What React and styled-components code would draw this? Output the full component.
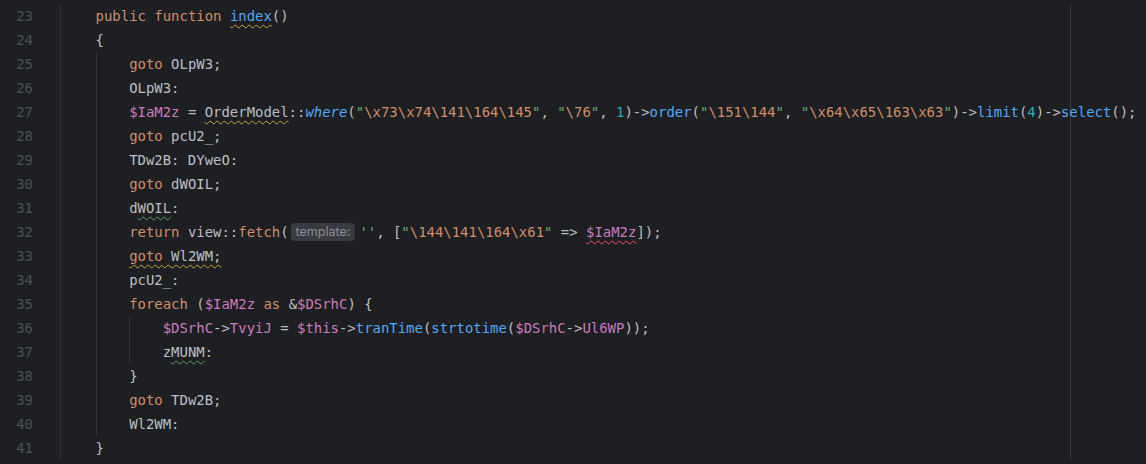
import React from "react";
import styled, { createGlobalStyle } from "styled-components";

const GlobalStyle = createGlobalStyle`
  html, body {
    margin: 0;
    padding: 0;
    background: #1e1f22;
    overflow: hidden;
  }
`;

const COLORS = {
  p: "#bcbec4",
  kw: "#cf8e6d",
  str: "#6aab73",
  esc: "#cf8e6d",
  num: "#2aacb8",
  fn: "#56a8f5",
  vr: "#c77dbb",
};

const WAVES = {
  warn: "#c9a43f",
  typo: "#5f9e62",
  err: "#f2566b",
};

const Editor = styled.div`
  display: flex;
  flex-direction: column;
  width: 1146px;
  height: 464px;
  padding-top: 4px;
  box-sizing: border-box;
  background: #1e1f22;
  font-family: "DejaVu Sans Mono", "Liberation Mono", monospace;
  font-size: 13.95px;
  overflow: hidden;
`;

const Row = styled.div`
  display: flex;
  height: 24px;
  line-height: 24px;
`;

const LineNo = styled.div`
  flex: 0 0 61px;
  box-sizing: border-box;
  padding-right: 27px;
  text-align: right;
  color: #4b5059;
  border-right: 1px solid #2e3034;
`;

const Code = styled.div`
  flex: 1;
  padding-left: 1px;
  white-space: pre;
  color: #bcbec4;
  background: linear-gradient(
    to right,
    transparent 1009px,
    #393b40 1009px,
    #393b40 1010px,
    transparent 1010px
  );
`;

const Indent = styled.span`
  display: inline-block;
  width: 4ch;
  height: 24px;
  vertical-align: top;
  box-shadow: ${(p) => (p.$guide ? "inset 1px 0 0 #313438" : "none")};
`;

const Tok = styled.span`
  color: ${(p) => COLORS[p.$t] || COLORS.p};
  font-style: ${(p) => (p.$i ? "italic" : "normal")};
  text-decoration: ${(p) =>
    p.$w ? `underline wavy ${WAVES[p.$w]}` : "none"};
  text-decoration-thickness: 1px;
  text-underline-offset: 3px;
  text-decoration-skip-ink: none;
`;

const Hint = styled.span`
  display: inline-block;
  height: 18px;
  line-height: 18px;
  padding: 0 5px;
  margin: 0 4px 0 2px;
  border-radius: 4px;
  background: #393b40;
  color: #8c8f95;
  font-family: Inter, "Noto Sans", sans-serif;
  font-size: 12.5px;
  vertical-align: middle;
  position: relative;
  top: -1px;
`;

const L = (n, indent, tokens) => ({ n, indent, tokens });

const LINES = [
  L(23, 1, [["kw", "public"], ["p", " "], ["kw", "function"], ["p", " "], ["fn", "index", "warn"], ["p", "()"]]),
  L(24, 1, [["p", "{"]]),
  L(25, 2, [["kw", "goto"], ["p", " OLpW3;"]]),
  L(26, 2, [["p", "OLpW3:"]]),
  L(27, 2, [
    ["vr", "$IaM2z"], ["p", " = "], ["p", "OrderModel", "warn"], ["p", "::"], ["fn", "where", null, true],
    ["p", "("], ["str", '"'], ["esc", "\\x73\\x74\\141\\164\\145"], ["str", '"'], ["p", ", "],
    ["str", '"'], ["esc", "\\76"], ["str", '"'], ["p", ", "], ["num", "1"], ["p", ")->"],
    ["fn", "order"], ["p", "("], ["str", '"'], ["esc", "\\151\\144"], ["str", '"'], ["p", ", "],
    ["str", '"'], ["esc", "\\x64\\x65\\163\\x63"], ["str", '"'], ["p", ")->"],
    ["fn", "limit"], ["p", "("], ["num", "4"], ["p", ")->"], ["fn", "select"], ["p", "();"],
  ]),
  L(28, 2, [["kw", "goto"], ["p", " pcU2_;"]]),
  L(29, 2, [["p", "TDw2B: DYweO:"]]),
  L(30, 2, [["kw", "goto"], ["p", " dWOIL;"]]),
  L(31, 2, [["p", "d"], ["p", "WOIL", "typo"], ["p", ":"]]),
  L(32, 2, [
    ["kw", "return"], ["p", " view::"], ["kw", "fetch"], ["p", "("], ["hint", "template:"],
    ["str", "''"], ["p", ", ["], ["str", '"'], ["esc", "\\144\\141\\164\\x61"], ["str", '"'],
    ["p", " => "], ["vr", "$IaM2z", "err"], ["p", "]);"],
  ]),
  L(33, 2, [["kw", "goto", "warn"], ["p", " ", "warn"], ["p", "Wl2WM;", "warn"]]),
  L(34, 2, [["p", "pcU2_:"]]),
  L(35, 2, [["kw", "foreach"], ["p", " ("], ["vr", "$IaM2z"], ["p", " "], ["kw", "as"], ["p", " &"], ["vr", "$DSrhC"], ["p", ") {"]]),
  L(36, 3, [
    ["vr", "$DSrhC"], ["p", "->"], ["vr", "TvyiJ"], ["p", " = "], ["vr", "$this"], ["p", "->"],
    ["fn", "tranTime"], ["p", "("], ["fn", "strtotime"], ["p", "("], ["vr", "$DSrhC"], ["p", "->"],
    ["vr", "Ul6WP"], ["p", "));"],
  ]),
  L(37, 3, [["p", "z"], ["p", "MUNM", "typo"], ["p", ":"]]),
  L(38, 2, [["p", "}"]]),
  L(39, 2, [["kw", "goto"], ["p", " TDw2B;"]]),
  L(40, 2, [["p", "Wl2WM:"]]),
  L(41, 1, [["p", "}"]]),
];

function Line({ n, indent, tokens }) {
  const units = Array.from({ length: indent }, (_, i) => (
    <Indent key={"i" + i} $guide={i >= 1} />
  ));
  return (
    <Row>
      <LineNo>{n}</LineNo>
      <Code>
        {units}
        {tokens.map(([t, text, w, it], i) =>
          t === "hint" ? (
            <Hint key={i}>{text}</Hint>
          ) : (
            <Tok key={i} $t={t} $w={w} $i={it}>
              {text}
            </Tok>
          )
        )}
      </Code>
    </Row>
  );
}

export default function App() {
  return (
    <>
      <GlobalStyle />
      <Editor>
        {LINES.map((l) => (
          <Line key={l.n} {...l} />
        ))}
      </Editor>
    </>
  );
}
